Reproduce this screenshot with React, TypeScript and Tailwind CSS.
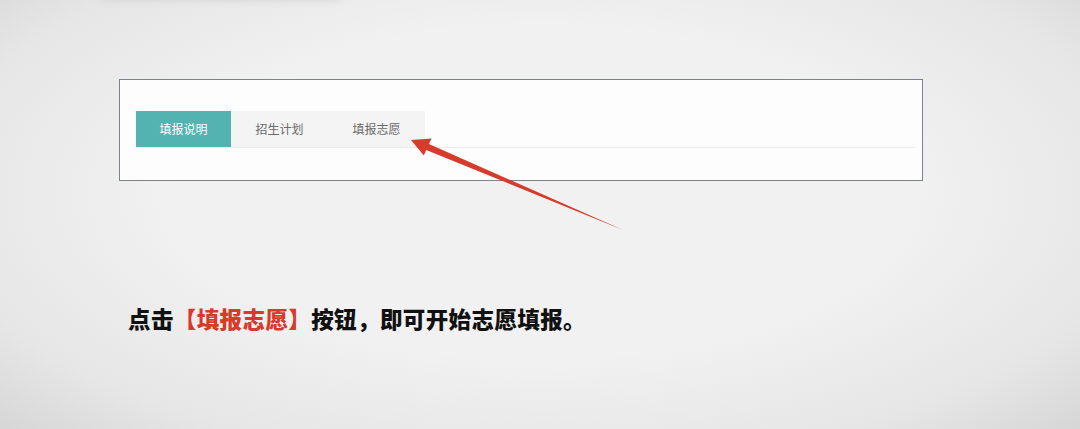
const tabs = ["填报说明", "招生计划", "填报志愿"];

const App = () => {
  return (
    <div
      className="relative w-[1080px] h-[429px] overflow-hidden bg-[radial-gradient(ellipse_75%_85%_at_50%_45%,#f1f1f1_45%,#e6e6e6_75%,#d0d0d0_100%)]"
      style={{ fontFamily: '"Noto Sans CJK SC", "Noto Sans", sans-serif' }}
    >
      <div className="absolute left-[100px] top-[-5px] w-[240px] h-[6px] rounded-full bg-[#d6d6d6] blur-[3px]" />
      <div className="pt-[79px] pl-[119px]">
        <div className="w-[804px] h-[102px] border border-[#7b8290] bg-[#fdfdfd] pt-[31px] pl-[16px] pr-[6px]">
          <div className="flex border-b border-[#ececec]">
            {tabs.map((t, i) => (
              <div
                key={t}
                className={
                  i === 0
                    ? "w-[95px] h-[36px] flex items-center justify-center bg-[#52b3b1] text-white text-[12px]"
                    : "w-[97px] h-[36px] flex items-center justify-center bg-[#f4f4f4] text-[#6a6a6a] text-[12px]"
                }
              >
                {t}
              </div>
            ))}
          </div>
        </div>
      </div>
      <div className="pt-[126px] pl-[128px] text-[22.5px] font-black text-[#111] leading-none tracking-[0.4px]">
        点击<span className="text-[#d8392b]">【填报志愿】</span>按钮，即可开始志愿填报。
      </div>
      <svg className="absolute left-0 top-0" width="1080" height="429">
        <polygon
          points="411,140 431.5,138.5 429,144 623,230 426.2,150 423.8,155.5"
          fill="#d63b2b"
        />
      </svg>
    </div>
  );
};

export default App;
